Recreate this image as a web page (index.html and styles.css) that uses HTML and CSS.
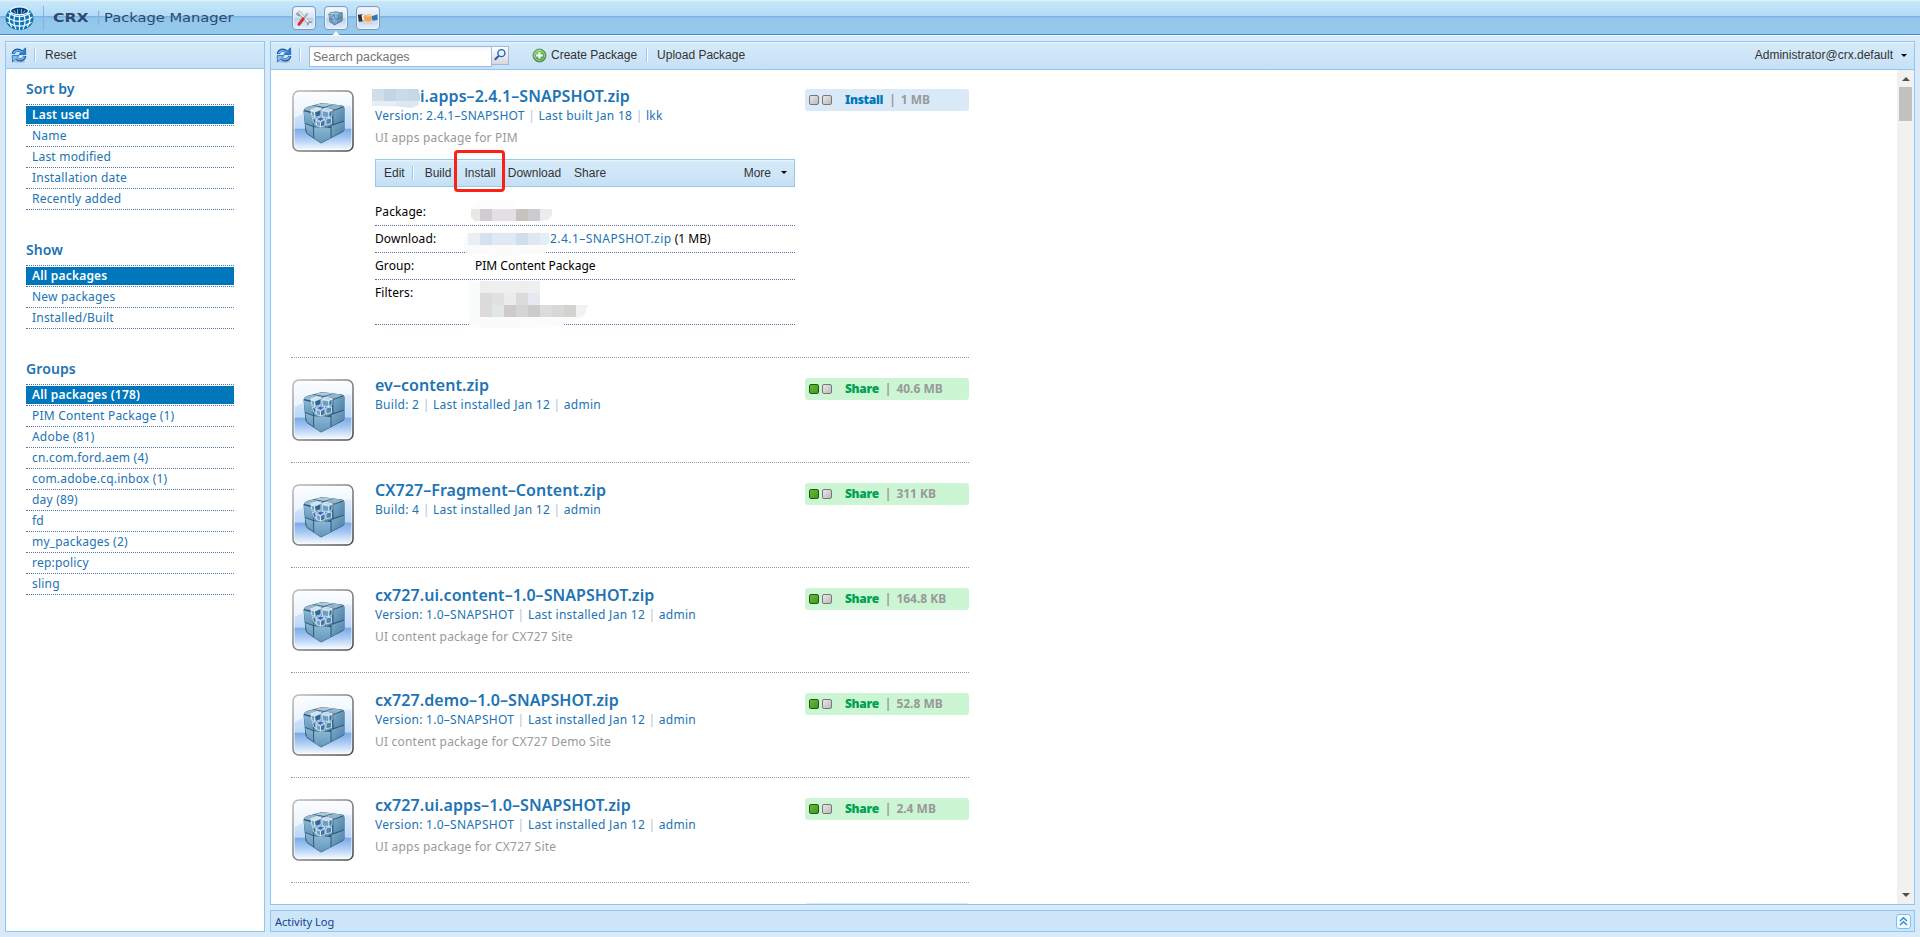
FILE: index.html
```
<!DOCTYPE html>
<html lang="en">
<head>
  <meta charset="utf-8">
  <title>CRX Package Manager</title>
  <link rel="stylesheet" href="styles.css">
</head>
<body>

  <svg class="defs" width="0" height="0">
    <defs>
      <linearGradient id="tileBg" x1="0" y1="0" x2="0" y2="1">
        <stop offset="0" stop-color="#f4f9ff"/>
        <stop offset="0.63" stop-color="#b9d6f8"/>
        <stop offset="0.635" stop-color="#7aa9e6"/>
        <stop offset="0.8" stop-color="#a5c8f3"/>
        <stop offset="1" stop-color="#f3f8ff"/>
      </linearGradient>
      <linearGradient id="tileEdge" x1="0" y1="0" x2="1" y2="1">
        <stop offset="0" stop-color="#bdbdbd"/>
        <stop offset="1" stop-color="#4e4e50"/>
      </linearGradient>
      <linearGradient id="cubeLeft" x1="0" y1="0" x2="0" y2="1">
        <stop offset="0" stop-color="#8ab6d3"/>
        <stop offset="1" stop-color="#6497bb"/>
      </linearGradient>
      <linearGradient id="cubeRight" x1="0" y1="0" x2="1" y2="1">
        <stop offset="0" stop-color="#7facca"/>
        <stop offset="1" stop-color="#4a7fa6"/>
      </linearGradient>
      <radialGradient id="plusBg" cx="0.4" cy="0.3" r="0.7">
        <stop offset="0" stop-color="#8fd070"/>
        <stop offset="1" stop-color="#3b8f38"/>
      </radialGradient>
      <symbol id="cube" viewBox="10 10 44 46">
        <path d="M11.500 20 Q12 17.500 15 16.500 L30 12.500 L50 15 Q52.500 15.500 52.500 18 L52.500 39 Q52.500 41 50 42 L29 53 L15 43.500 L13.500 41 Z" fill="#2f5874"/>
        <path d="M12 19.500 Q12.500 17.500 15 16.800 L20.500 15.200 L31 17 L21.500 21.500 Z" fill="#94b8cf"/>
        <path d="M22 14.700 L30.500 12.700 L41 13.800 L32 16.500 Z" fill="#adc9da"/>
        <path d="M33 16.800 L42 14 L51.500 15.500 L43 19 Z" fill="#8fb4cc"/>
        <path d="M22.500 21.800 L32 17.300 L42.500 19.300 L33 24.500 Z" fill="#9cbfd5"/>
        <path d="M11.700 20.700 L20.500 23 L21 35.500 L13 32.500 Z" fill="url(#cubeLeft)"/>
        <path d="M21.300 23 L32.800 25 L33 38 L21.800 35.800 Z" fill="url(#cubeLeft)"/>
        <path d="M13.200 33.500 L21 36.500 L21.300 47 L15 42.500 Z" fill="url(#cubeLeft)"/>
        <path d="M22 36.700 L38.500 37.500 L38.500 47.500 L29 52.500 L22.300 48 Z" fill="url(#cubeLeft)"/>
        <path d="M33.300 25 L40 21 L40.500 34.500 L33.500 37.500 Z" fill="url(#cubeRight)"/>
        <path d="M41.300 20.500 L52.200 16.500 L52.200 30 L41.500 33.500 Z" fill="url(#cubeRight)"/>
        <path d="M39.500 35.500 L52.200 31 L52 40 L39.500 47 Z" fill="url(#cubeRight)"/>
        <path d="M19 19 L27 17 L31 18.500 L40 19.500 L40 33 L31 36.500 L24 35.500 L20.500 31 Z" fill="#5d92b8"/>
        <g stroke="#f3f9fd" stroke-width="0.700" stroke-linejoin="round">
          <path d="M18.500 19.500 L25 17 L29.500 18.500 L22.500 21.500 Z" fill="#cfe1ec"/>
          <path d="M30 19.500 L34 17.500 L40 19 L37 21 Z" fill="#b9d3e3"/>
          <path d="M19 20.500 L22.500 21.800 V27 L20 26 Z" fill="#6fa3c6"/>
          <path d="M22.500 21.800 L29 19 V25 L23.500 27 Z" fill="#2f6893"/>
          <path d="M30 20.300 L37 21.500 V27 L30.500 26.500 Z" fill="#6ba0c6"/>
          <path d="M37 21.500 L40 19.500 V25.500 L37 27 Z" fill="#3b729b"/>
          <path d="M20.500 27.500 L24 29 V34 L21.500 32 Z" fill="#356b95"/>
          <path d="M24 28.500 L28.500 26.500 L33 28 L28.500 30.800 Z" fill="#3c69c6"/>
          <path d="M24 30 L28.500 31.500 V36.500 L24.500 35 Z" fill="#6ea4ca"/>
          <path d="M28.500 31.500 L33 29 V35 L28.500 36.500 Z" fill="#3f759e"/>
          <path d="M34 28.500 L39.500 27.500 V33 L34 34.500 Z" fill="#4f87b0"/>
        </g>
      </symbol>
      <symbol id="package" viewBox="0 0 62 62">
        <rect x="1" y="1" width="60" height="60" rx="6" fill="#fff" stroke="url(#tileEdge)" stroke-width="1.600"/>
        <rect x="2.500" y="2.500" width="57" height="57" rx="4.500" fill="url(#tileBg)"/>
        <path d="M2.500 7 Q2.500 2.500 7 2.500 H55 Q59.500 2.500 59.500 7 V16 Q30 12 2.500 28 Z" fill="#fff" opacity="0.6"/>
        <use href="#cube" x="10" y="10.500" width="44" height="46"/>
      </symbol>
      <symbol id="refresh" viewBox="0 0 16 16">
        <ellipse cx="8.500" cy="14.500" rx="5.500" ry="1.300" fill="#9dabb8" opacity="0.7"/>
        <path d="M2.200 7 C3 3 7 1.800 10.500 4.500" fill="none" stroke="#14539c" stroke-width="3.200"/>
        <path d="M8 7.500 L14.800 7.500 L14.500 0.800 Z" fill="#2f7fd8" stroke="#14539c" stroke-width="0.700"/>
        <path d="M2.600 6.500 C3.600 3.400 7 2.400 10.800 5" fill="none" stroke="#6db6f5" stroke-width="1.700"/>
        <path d="M13.800 9 C13 13 9 14.200 5.500 11.500" fill="none" stroke="#14539c" stroke-width="3.200"/>
        <path d="M8 8.600 L1.200 8.600 L1.500 15.200 Z" fill="#7fc3f8" stroke="#14539c" stroke-width="0.700"/>
        <path d="M13.400 9.500 C12.400 12.600 9 13.600 5.200 11" fill="none" stroke="#6db6f5" stroke-width="1.700"/>
      </symbol>
    </defs>
  </svg>

  <div class="header">
    <svg class="logo" viewBox="0 0 30 26">
      <ellipse cx="15" cy="13" rx="14.500" ry="12" fill="#0a72b5"/>
      <ellipse cx="15" cy="5.500" rx="8.500" ry="3.600" fill="#0c3c74"/>
      <g fill="none" stroke="#eaf6fd" stroke-width="1.300">
        <ellipse cx="15" cy="5" rx="9.500" ry="4"/>
        <path d="M3.500 7 Q15 15 26.500 7 M1.500 11.500 Q15 20.500 28.500 11.500 M2.500 17 Q15 25 27.500 17"/>
        <path d="M6.500 7 Q1.500 13 7 22 M10.500 9 Q7.500 16 11.500 24.500 M15 9.500 V25 M19.500 9 Q22.500 16 18.500 24.500 M23.500 7 Q28.500 13 23 22"/>
      </g>
      <path d="M9 4.500 L11 7 M13 3 V8 M17 3 V8 M21 4.500 L19 7" stroke="#5db7e8" stroke-width="1.200"/>
    </svg>
    <div class="header-title"><b>CRX</b><span>Package Manager</span></div>
    <div class="header-apps">
      <div class="app">
        <svg viewBox="0 0 24 24">
          <path d="M6 5 L9 8.500 L18 18" stroke="#9aa4ae" stroke-width="3.400" fill="none"/>
          <path d="M6.500 5.500 L19 19" stroke="#f1f3f5" stroke-width="1.800" fill="none"/>
          <path d="M4 6.500 Q5 9.500 8 9.500 M16 20 Q16 16 20.500 16.500" stroke="#8f99a3" stroke-width="1.800" fill="none"/>
          <path d="M16 7 L11.500 12.500" stroke="#a3abb2" stroke-width="2"/>
          <path d="M11 13 L6.500 19" stroke="#d9302c" stroke-width="3.200" stroke-linecap="round"/>
        </svg>
      </div>
      <div class="app active"><svg viewBox="0 0 24 24"><use href="#cube" x="3" y="4" width="17" height="17"/></svg></div>
      <div class="app">
        <svg viewBox="0 0 24 24">
          <path d="M1 8.500 L6 8 L7 15.500 L2 16 Z" fill="#2d3338"/>
          <path d="M5 9 L7 8.500 L8 14.500 L6 15 Z" fill="#fff"/>
          <path d="M7 9.500 L13 8 Q17.500 9 17.500 12 L14 16 L10 15.500 L7.500 14 Z" fill="#f5a552"/>
          <path d="M10 10 L15 9 L18 11" stroke="#ffd09a" stroke-width="1.500" fill="none"/>
          <path d="M16 10 L22.500 8 V14 L17 15 Z" fill="#2c78b6"/>
          <path d="M7 18 H17" stroke="#e8c9a8" stroke-width="1.500" opacity="0.6"/>
        </svg>
      </div>
    </div>
  </div>

  <div class="main">
    <div class="panel sidebar">
      <div class="toolbar">
        <svg class="icon-refresh"><use href="#refresh"/></svg>
        <i class="sep"></i>
        <span class="btn reset">Reset</span>
      </div>
      <div class="filters">
        <h3>Sort by</h3>
        <ul>
          <li class="selected"><a>Last used</a></li>
          <li><a>Name</a></li>
          <li><a>Last modified</a></li>
          <li><a>Installation date</a></li>
          <li><a>Recently added</a></li>
        </ul>
        <h3>Show</h3>
        <ul>
          <li class="selected"><a>All packages</a></li>
          <li><a>New packages</a></li>
          <li><a>Installed/Built</a></li>
        </ul>
        <h3>Groups</h3>
        <ul>
          <li class="selected"><a>All packages (178)</a></li>
          <li><a>PIM Content Package (1)</a></li>
          <li><a>Adobe (81)</a></li>
          <li><a>cn.com.ford.aem (4)</a></li>
          <li><a>com.adobe.cq.inbox (1)</a></li>
          <li><a>day (89)</a></li>
          <li><a>fd</a></li>
          <li><a>my_packages (2)</a></li>
          <li><a>rep:policy</a></li>
          <li><a>sling</a></li>
        </ul>
      </div>
    </div>

    <div class="content">
      <div class="panel packages">
        <div class="toolbar">
          <svg class="icon-refresh"><use href="#refresh"/></svg>
          <i class="sep"></i>
          <div class="search">
            <input type="text" placeholder="Search packages">
            <div class="trigger">
              <svg viewBox="0 0 16 18"><circle cx="9.500" cy="6.500" r="3.700" fill="#e4f3ff" stroke="#2467b0" stroke-width="1.500"/><path d="M6.600 9.400 L2.500 13.500" stroke="#1d5da6" stroke-width="2.200"/></svg>
            </div>
          </div>
          <svg class="icon-add" viewBox="0 0 16 16"><circle cx="8" cy="8" r="7" fill="url(#plusBg)" stroke="#5b8a5b" stroke-width="0.800"/><circle cx="8" cy="8" r="5.400" fill="none" stroke="#bfe3b2" stroke-width="0.800"/><path d="M8 4.500 V11.500 M4.500 8 H11.500" stroke="#fff" stroke-width="2"/></svg>
          <span class="btn">Create Package</span>
          <i class="sep sep-upload"></i>
          <span class="btn">Upload Package</span>
          <span class="btn user">Administrator@crx.default</span>
          <i class="caret"></i>
        </div>

        <div class="scroll">
          <div class="list">
            <div class="item first">
              <svg class="thumb"><use href="#package"/></svg>
              <div class="info">
                <div class="name masked">i.apps–2.4.1–SNAPSHOT.zip
                  <svg class="mask-name" viewBox="0 0 48 19">
                    <path d="M0 0 H47 V16 L40 19 L30 17.500 L0 17 Z" fill="#e6eef5"/>
                    <path d="M0 0 H12 V12 H0 Z" fill="#d0deea"/>
                    <path d="M12 0 H24 V12 H12 Z" fill="#c2d5e6"/>
                    <path d="M24 0 H36 V12 H24 Z" fill="#cadae8"/>
                    <path d="M36 0 H46 L48 6 V12 H36 Z" fill="#c6d7e6"/>
                    <path d="M24 12 H47 L45 17 L38 19 L24 17 Z" fill="#dce8f1"/>
                  </svg>
                </div>
                <div class="meta">Version: 2.4.1–SNAPSHOT <i>|</i> Last built Jan 18 <i>|</i> lkk</div>
                <div class="desc">UI apps package for PIM</div>
                <div class="actions">
                  <span class="edit">Edit</span>
                  <i class="sep"></i>
                  <span class="build">Build</span>
                  <span class="install">Install<b class="highlight"></b></span>
                  <span class="download">Download</span>
                  <span>Share</span>
                  <span class="more">More</span>
                  <i class="caret"></i>
                </div>
                <div class="details">
                  <div class="detail"><label>Package:</label></div>
                  <div class="detail"><label>Download:</label><span class="file"><a>2.4.1–SNAPSHOT.zip</a> (1 MB)</span></div>
                  <div class="detail"><label>Group:</label><span>PIM Content Package</span></div>
                  <div class="detail tall"><label>Filters:</label></div>
                  <svg class="mask-details" viewBox="460 198 132 134">
                    <path d="M472 207 L480 200 H515 V209 H552 L549 219 L540 223 H475 L470 216 Z" fill="#fdfdfd"/>
                    <path d="M471 209 H480 V221 H475 L471 217 Z" fill="#e9e8e4"/>
                    <path d="M480 209 h12 v12 h-12z" fill="#cfcdd0"/>
                    <path d="M492 209 h24 v12 h-24z" fill="#e2e0e4"/>
                    <path d="M516 209 h12 v12 h-12z" fill="#c5c3bf"/>
                    <path d="M528 209 h12 v12 h-12z" fill="#cccbcd"/>
                    <path d="M540 209 H552 V215 L548 220 L540 221 Z" fill="#ebecf0"/>
                    <path d="M463 245 L468 231 H548 L550 243 L544 254 L500 256 L467 254 Z" fill="#fbfbfc"/>
                    <path d="M468 233 h12 v12 h-12z" fill="#e8eff5"/>
                    <path d="M480 233 h12 v12 h-12z" fill="#d5e1ee"/>
                    <path d="M492 233 h24 v12 h-24z" fill="#dfe9f3"/>
                    <path d="M516 233 h12 v12 h-12z" fill="#cfdeea"/>
                    <path d="M528 233 h12 v12 h-12z" fill="#dde8f2"/>
                    <path d="M540 233 h9 l1 7 l-3 5 h-7z" fill="#e4eef5"/>
                    <path d="M468 281 H540 V305 H588 L584 317 L565 324 L560 327 L480 328 L469 326 Z" fill="#fafbfc"/>
                    <path d="M480 281 h12 v12 h-12z M516 281 h12 v12 h-12z" fill="#efeeed"/>
                    <path d="M492 281 h24 v12 h-24z M528 281 h12 v12 h-12z" fill="#eeeff1"/>
                    <path d="M480 293 h12 v24 h-12z M516 293 h12 v12 h-12z" fill="#dcdbd9"/>
                    <path d="M492 293 h12 v12 h-12z" fill="#dfe1e3"/>
                    <path d="M504 293 h12 v12 h-12z" fill="#ececec"/>
                    <path d="M528 293 h12 v12 h-12z" fill="#e6e8f0"/>
                    <path d="M492 305 h12 v12 h-12z" fill="#e2e6e4"/>
                    <path d="M504 305 h12 v12 h-12z" fill="#cccbc7"/>
                    <path d="M516 305 h12 v12 h-12z" fill="#d2d4d6"/>
                    <path d="M528 305 h12 v12 h-12z" fill="#cbcbcc"/>
                    <path d="M540 305 h12 v12 h-12z" fill="#dcdcdf"/>
                    <path d="M552 305 h12 v12 h-12z" fill="#d6d9d8"/>
                    <path d="M564 305 h12 v12 h-12z" fill="#d2d2cf"/>
                    <path d="M576 305 h12 l-3 9 l-4 3 h-5z" fill="#f2f1f4"/>
                  </svg>
                </div>
              </div>
              <div class="status built"><i class="led"></i><i class="led"></i><b>Install</b><em>|</em><span>1 MB</span></div>
            </div>

            <div class="item">
              <svg class="thumb"><use href="#package"/></svg>
              <div class="info">
                <div class="name">ev–content.zip</div>
                <div class="meta">Build: 2 <i>|</i> Last installed Jan 12 <i>|</i> admin</div>
              </div>
              <div class="status"><i class="led on"></i><i class="led"></i><b>Share</b><em>|</em><span>40.6 MB</span></div>
            </div>

            <div class="item">
              <svg class="thumb"><use href="#package"/></svg>
              <div class="info">
                <div class="name">CX727–Fragment–Content.zip</div>
                <div class="meta">Build: 4 <i>|</i> Last installed Jan 12 <i>|</i> admin</div>
              </div>
              <div class="status"><i class="led on"></i><i class="led"></i><b>Share</b><em>|</em><span>311 KB</span></div>
            </div>

            <div class="item">
              <svg class="thumb"><use href="#package"/></svg>
              <div class="info">
                <div class="name">cx727.ui.content–1.0–SNAPSHOT.zip</div>
                <div class="meta">Version: 1.0–SNAPSHOT <i>|</i> Last installed Jan 12 <i>|</i> admin</div>
                <div class="desc">UI content package for CX727 Site</div>
              </div>
              <div class="status"><i class="led on"></i><i class="led"></i><b>Share</b><em>|</em><span>164.8 KB</span></div>
            </div>

            <div class="item">
              <svg class="thumb"><use href="#package"/></svg>
              <div class="info">
                <div class="name">cx727.demo–1.0–SNAPSHOT.zip</div>
                <div class="meta">Version: 1.0–SNAPSHOT <i>|</i> Last installed Jan 12 <i>|</i> admin</div>
                <div class="desc">UI content package for CX727 Demo Site</div>
              </div>
              <div class="status"><i class="led on"></i><i class="led"></i><b>Share</b><em>|</em><span>52.8 MB</span></div>
            </div>

            <div class="item">
              <svg class="thumb"><use href="#package"/></svg>
              <div class="info">
                <div class="name">cx727.ui.apps–1.0–SNAPSHOT.zip</div>
                <div class="meta">Version: 1.0–SNAPSHOT <i>|</i> Last installed Jan 12 <i>|</i> admin</div>
                <div class="desc">UI apps package for CX727 Site</div>
              </div>
              <div class="status"><i class="led on"></i><i class="led"></i><b>Share</b><em>|</em><span>2.4 MB</span></div>
            </div>

            <div class="item last">
              <div class="status built"></div>
            </div>
          </div>

          <div class="scrollbar">
            <i class="arrow up"></i>
            <i class="thumb-bar"></i>
            <i class="arrow down"></i>
          </div>
        </div>
      </div>

      <div class="panel log">
        <span>Activity Log</span>
        <svg class="expand" viewBox="0 0 15 15"><rect x="0.500" y="0.500" width="14" height="14" rx="2.500" fill="#f2faff" stroke="#7cc0f0"/><path d="M4 7 L7.500 3.800 L11 7 M4 11 L7.500 7.800 L11 11" fill="none" stroke="#2a8fd0" stroke-width="1.500"/></svg>
      </div>
    </div>
  </div>

</body>
</html>
```
FILE: styles.css
```
* {
  box-sizing: border-box;
}
body {
  margin: 0;
  height: 937px;
  overflow: hidden;
  display: flex;
  flex-direction: column;
  background-color: #dbeaf9;
  font-family: "Noto Sans", sans-serif;
  font-size: 12px;
  color: #000;
}
i, em {
  font-style: normal;
}
ul, h3 {
  margin: 0;
  padding: 0;
  list-style: none;
}
.defs {
  position: absolute;
}

/* header */
.header {
  flex: none;
  height: 36px;
  display: flex;
  padding-left: 5px;
  border-bottom: 1px solid #fff;
  box-shadow: inset 0 -1px 0 #3f8bdc;
  background: linear-gradient(#e6f3f5 0, #c5e7fb 2px, #b3daf5 16px, #78b5e8 16px, #78b5e8 17px, #93c5e9 18px, #95c8ea 25px, #93caee 36px);
}
.logo {
  width: 29px;
  height: 25px;
  margin-top: 6px;
}
.header-title {
  display: flex;
  align-items: center;
  height: 24px;
  margin: 6px 0 0 9px;
  padding-left: 9px;
  border-left: 1px solid #7fb5e0;
  width: 249px;
  font-family: "DejaVu Sans", sans-serif;
  font-size: 12px;
  color: #2b4a6b;
}
.header-title b {
  width: 45px;
  transform: scaleX(1.3);
  transform-origin: left;
  white-space: nowrap;
}
.header-title span {
  border-left: 1px solid #7fb5e0;
  padding-left: 4px;
  line-height: 14px;
  transform: scaleX(1.22);
  transform-origin: left;
}
.header-apps {
  display: flex;
  gap: 8px;
  padding-top: 6px;
}
.app {
  width: 24px;
  height: 24px;
  border: 1px solid #7e96c4;
  border-radius: 4px;
  background: linear-gradient(#f7fbff, #d3e3f5 50%, #b9cfec 50%, #e6f0fb);
  box-shadow: inset 0 0 0 1px #edf3fb;
  position: relative;
}
.app svg {
  display: block;
  width: 22px;
  height: 22px;
}
.app.active::after {
  content: "";
  position: absolute;
  left: 7px;
  top: 24px;
  border: 4px solid transparent;
  border-top: 0;
  border-bottom: 5px solid #f2f8fd;
}

/* panels */
.main {
  flex: 1;
  display: flex;
  gap: 5px;
  padding: 5px;
  min-height: 0;
}
.panel {
  border: 1px solid #8cc8f2;
  background-color: #fff;
}
.sidebar {
  width: 260px;
}
.content {
  flex: 1;
  display: flex;
  flex-direction: column;
  gap: 5px;
  min-width: 0;
  min-height: 0;
}
.packages {
  flex: 1;
  display: flex;
  flex-direction: column;
  min-height: 0;
}
.toolbar {
  flex: none;
  height: 27px;
  display: flex;
  align-items: center;
  padding-left: 5px;
  border-bottom: 1px solid #8cc8f2;
  background: linear-gradient(#f0f8fe 0, #d3eafa 2px, #cfe6f8 14px, #c6e0f5);
  font-family: "Liberation Sans", Arial, sans-serif;
  font-size: 12px;
  color: #333;
}
.packages .toolbar {
  height: 28px;
  padding-bottom: 1px;
}
.icon-refresh {
  width: 16px;
  height: 16px;
}
.sep {
  width: 2px;
  height: 14px;
  margin-left: 7px;
  border-left: 1px solid #98c8ff;
  border-right: 1px solid #fff;
}
.reset {
  margin-left: 9px;
}
.search {
  display: flex;
  align-self: flex-start;
  margin: 4px 0 0 8px;
}
.search input {
  width: 183px;
  height: 21px;
  padding: 1px 3px;
  border: 1px solid #a6b6de;
  background: linear-gradient(#f2f4f6, #fff 4px);
  font-family: "Liberation Sans", Arial, sans-serif;
  font-size: 12.500px;
  outline: none;
}
.search input::placeholder {
  color: #757575;
}
.trigger {
  width: 17px;
  height: 19px;
  border: 1px solid #a6b6de;
  border-left: 0;
  background: linear-gradient(#fff, #d9d6de);
}
.trigger svg {
  display: block;
  width: 16px;
  height: 17px;
}
.icon-add {
  width: 15px;
  height: 15px;
  margin: 0 4px 0 23px;
}
.sep-upload {
  margin: 0 9px 0 9px;
}
.user {
  margin-left: auto;
  margin-right: 8px;
}
.caret {
  width: 0;
  border: 3px solid transparent;
  border-top-color: #000;
  border-bottom: 0;
}
.packages .toolbar > .caret {
  margin-right: 7px;
}

/* sidebar lists */
.filters {
  padding: 10px 30px 0 20px;
  color: #2173b4;
}
.filters h3 {
  height: 25px;
  line-height: 20px;
  font-size: 14px;
  font-weight: 600;
  letter-spacing: 0.100px;
}
.filters ul {
  border-top: 1px dotted #4f74b0;
  margin-bottom: 30px;
}
.filters li {
  height: 21px;
  padding: 1px 0;
  border-bottom: 1px dotted #4f74b0;
}
.filters li a {
  display: block;
  height: 18px;
  line-height: 18px;
  padding-left: 6px;
  letter-spacing: 0.200px;
}
.filters li.selected a {
  background-color: #0077ba;
  color: #fff;
  font-weight: 600;
}

/* package list */
.scroll {
  flex: 1;
  display: flex;
  justify-content: space-between;
  min-height: 0;
  overflow: hidden;
}
.list {
  width: 698px;
  padding-left: 20px;
}
.item {
  display: flex;
  height: 105px;
  padding: 21px 0 0 1px;
  border-bottom: 1px dotted #999;
}
.item.first {
  height: 288px;
  padding-top: 20px;
}
.item.last {
  justify-content: flex-end;
}
.thumb {
  width: 62px;
  height: 62px;
}
.info {
  width: 420px;
  margin: 0 10px 0 21px;
}
.name {
  height: 20px;
  line-height: 13px;
  font-size: 16px;
  font-weight: 600;
  letter-spacing: 0.060px;
  color: #2173b4;
  position: relative;
}
.name.masked {
  padding-left: 45px;
}
.mask-name {
  position: absolute;
  left: -3px;
  top: -1px;
  width: 48px;
  height: 19px;
}
.meta {
  height: 22px;
  line-height: 12px;
  letter-spacing: 0.280px;
  color: #2173b4;
}
.meta i {
  color: #b5bed8;
}
.desc {
  height: 27px;
  line-height: 12px;
  letter-spacing: 0.200px;
  color: #999;
}
.actions {
  display: flex;
  align-items: center;
  height: 28px;
  padding-left: 8px;
  border: 1px solid #99cbe0;
  background: linear-gradient(#eef7fd 0, #d3eafa 2px, #cfe6f8 14px, #c3e0f5);
  font-family: "Liberation Sans", Arial, sans-serif;
  color: #333;
  padding-bottom: 1px;
}
.build {
  margin-left: 11px;
}
.install {
  margin: 0 12px 0 13px;
  position: relative;
}
.highlight {
  position: absolute;
  left: -10px;
  top: -16px;
  width: 51px;
  height: 42px;
  border: 3px solid #ff2015;
  border-radius: 4px;
}
.download {
  margin-right: 13px;
}
.more {
  margin: 0 10px 0 auto;
}
.actions .caret {
  margin-right: 7px;
}
.details {
  padding-top: 12px;
  position: relative;
}
.detail {
  display: flex;
  height: 27px;
  padding-top: 3px;
  line-height: 20px;
  border-bottom: 1px dotted #5b6f9f;
}
.detail.tall {
  height: 45px;
}
.detail label {
  width: 100px;
  letter-spacing: 0.100px;
}
.detail .file {
  padding-left: 75px;
}
.detail a {
  letter-spacing: 0.450px;
  color: #2173b4;
}
.mask-details {
  position: absolute;
  left: 85px;
  top: 11px;
  width: 132px;
  height: 134px;
}
.status {
  display: flex;
  align-items: center;
  width: 164px;
  height: 22px;
  margin-top: -1px;
  padding: 0 0 1px 4px;
  border-radius: 3px;
  background-color: #ccf6d3;
  font-weight: 700;
  color: #999;
}
.status.built {
  background-color: #dae9f8;
}
.led {
  width: 10px;
  height: 10px;
  margin-right: 3px;
  border: 1px solid #777;
  border-radius: 2px;
  background: linear-gradient(135deg, #e8e8e8, #bbb);
}
.led.on {
  border-color: #175d14;
  background: linear-gradient(135deg, #6cb838, #3f9a1c);
}
.status b {
  margin-left: 10px;
  letter-spacing: -0.300px;
  color: #00a150;
}
.status.built b {
  color: #0077ba;
}
.status em {
  margin: 0 5px 0 6px;
}

/* scrollbar */
.scrollbar {
  width: 17px;
  display: flex;
  flex-direction: column;
  align-items: center;
  background-color: #f1f1f1;
}
.arrow {
  border: 4px solid transparent;
}
.arrow.up {
  margin-top: 7px;
  border-top: 0;
  border-bottom-color: #505050;
}
.arrow.down {
  margin: auto 0 7px;
  border-bottom: 0;
  border-top-color: #505050;
}
.thumb-bar {
  width: 13px;
  height: 34px;
  margin-top: 6px;
  background-color: #c1c1c1;
}

/* activity log */
.log {
  flex: none;
  height: 22px;
  display: flex;
  align-items: center;
  justify-content: space-between;
  padding: 0 3px 0 4px;
  background-color: #cde5f8;
  font-size: 11px;
  color: #15428b;
}
.expand {
  width: 15px;
  height: 15px;
}
```
